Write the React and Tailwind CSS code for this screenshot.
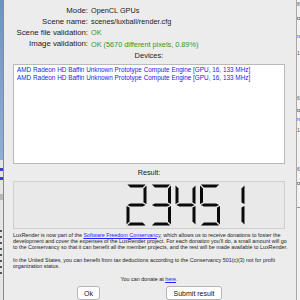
import React from 'react';

// 7-segment digit shapes, digit box 20 x 41
const W = 20;
const H = 41;
const T = 3;
const G = 0.9;
const M = H / 2;

const SEGMENTS = {
  a: `${G},0 ${W - G},0 ${W - G - T},${T} ${G + T},${T}`,
  d: `${G},${H} ${W - G},${H} ${W - G - T},${H - T} ${G + T},${H - T}`,
  g: `${G},${M} ${G + T},${M - T / 2} ${W - G - T},${M - T / 2} ${W - G},${M} ${W - G - T},${M + T / 2} ${G + T},${M + T / 2}`,
  f: `0,${G} ${T},${T + G} ${T},${M - T / 2 - G} 0,${M - G}`,
  b: `${W},${G} ${W - T},${T + G} ${W - T},${M - T / 2 - G} ${W},${M - G}`,
  e: `0,${M + G} ${T},${M + T / 2 + G} ${T},${H - T - G} 0,${H - G}`,
  c: `${W},${M + G} ${W - T},${M + T / 2 + G} ${W - T},${H - T - G} ${W},${H - G}`,
};

const DIGITS = {
  1: ['b', 'c'],
  2: ['a', 'b', 'g', 'e', 'd'],
  3: ['a', 'b', 'g', 'c', 'd'],
  4: ['f', 'g', 'b', 'c'],
  5: ['a', 'f', 'g', 'c', 'd'],
};

const LcdNumber = ({ value }) => {
  const chars = String(value).split('');
  return (
    <svg width={120} height={H + 1} viewBox={`0 0 120 ${H + 1}`}>
      {chars.map((ch, i) => (
        <g key={i} transform={`translate(${i * 24.5 + 0.5} 0.5)`}>
          {DIGITS[ch].map((s) => (
            <polygon key={s} points={SEGMENTS[s]} fill="#0a0a0a" />
          ))}
        </g>
      ))}
    </svg>
  );
};

const InfoRow = ({ label, children, valueClass = 'text-[#1a1a1a]' }) => (
  <div className="flex h-[11.5px] items-center">
    <div className="w-[75px] shrink-0 whitespace-nowrap text-right text-[7.8px] text-[#1a1a1a]">{label}</div>
    <div className={`ml-[3px] whitespace-nowrap text-[7.3px] ${valueClass}`}>{children}</div>
  </div>
);

const devices = [
  'AMD Radeon HD Baffin Unknown Prototype Compute Engine [GPU, 16, 133 MHz]',
  'AMD Radeon HD Baffin Unknown Prototype Compute Engine [GPU, 16, 133 MHz]',
];

export default function App() {
  return (
    <div
      className="flex h-[300px] w-[300px] overflow-hidden bg-[#ececec]"
      style={{ fontFamily: '"Liberation Sans", Arial, sans-serif' }}
    >
      {/* background window, left */}
      <div className="flex w-[4px] shrink-0 flex-col border-r border-[#8a8a8a]">
        <div className="h-[160px] bg-gradient-to-b from-[#6d93c6] to-[#8db0da]" />
        <div className="flex-1 bg-[#e4e4e4]">
          <div className="mt-[8px] h-[3px] w-[3px] bg-[#3a3ae0]" />
          <div className="mt-[6px] h-[3px] w-[3px] bg-[#3a3ae0]" />
          <div className="mt-[14px] h-[6px] bg-[#b8b8b8]" />
          <div className="mt-[30px] flex flex-col gap-[4px]">
            {[0, 1, 2, 3, 4, 5, 6, 7].map((i) => (
              <div key={i} className="h-[2px] w-[2px] bg-[#555]" />
            ))}
          </div>
        </div>
      </div>

      {/* dialog */}
      <div className="flex w-[292px] shrink-0 flex-col pl-[9px] pr-[11px] pt-[5px] text-[7px] leading-none">
        <InfoRow label="Mode:">OpenCL GPUs</InfoRow>
        <InfoRow label="Scene name:">scenes/luxball/render.cfg</InfoRow>
        <InfoRow label="Scene file validation:" valueClass="text-[#2a9a2a]">OK</InfoRow>
        <InfoRow label="Image validation:" valueClass="text-[#2a9a2a]">
          OK (5670 different pixels, 0.89%)
        </InfoRow>
        <div className="flex h-[11.5px] items-center justify-center text-[7.5px] text-[#1a1a1a]">Devices:</div>

        <div className="mt-[3px] h-[102px] border border-[#b9b9b9] bg-white pl-[3px] pt-[2px] text-[6.4px]">
          {devices.map((d, i) => (
            <div key={i} className="h-[7.8px] whitespace-nowrap text-[#2222ee]">
              {d}
            </div>
          ))}
        </div>

        <div className="mt-[3px] flex h-[11px] items-center justify-center text-[7.3px] text-[#1a1a1a]">Result:</div>

        <div className="mt-[3px] flex h-[49px] items-center justify-end border border-[#cfcfcf] bg-[#e9e9e9] pr-[38px]">
          <LcdNumber value="23451" />
        </div>

        <div className="mt-[3px] text-[5.4px] leading-[6.4px] text-[#222]">
          <div className="whitespace-nowrap">
            LuxRender is now part of the{' '}
            <span className="text-[#2323ff] underline">Software Freedom Conservancy</span>, which allows us to
            receive donations to foster the
          </div>
          <div className="whitespace-nowrap">
            development and cover the expenses of the LuxRender project. For each donation you'll do, a small
            amount will go
          </div>
          <div className="whitespace-nowrap">
            to the Conservancy so that it can benefit all the member projects, and the rest will be made
            available to LuxRender.
          </div>
          <div className="mt-[6px] whitespace-nowrap">
            In the United States, you can benefit from tax deductions according to the Conservancy 501(c)(3)
            not for profit
          </div>
          <div className="whitespace-nowrap">organization status.</div>
          <div className="mt-[6px] text-center">
            You can donate at <span className="text-[#2323ff] underline">here</span>.
          </div>
        </div>

        <div className="mt-[4px] flex">
          <button className="ml-[64px] h-[14px] w-[23px] rounded-[3px] border border-[#b4b4b4] bg-white text-[7px] text-[#111]">
            Ok
          </button>
          <button className="ml-[66px] h-[14px] w-[56px] rounded-[3px] border border-[#b4b4b4] bg-white text-[7px] text-[#111]">
            Submit result
          </button>
        </div>
      </div>

      {/* background window, right */}
      <div className="flex w-[4px] shrink-0 flex-col overflow-hidden border-l border-[#a9a9a9] bg-[#f2f2f2] text-[5px] leading-none text-[#555]">
        <div className="mt-[2px]">8</div>
        <div className="mt-[10px] h-[3px] w-[3px] border border-[#999]" />
        <div className="mt-[14px] text-[#2222ee]">n</div>
        <div className="mt-[12px]">1.</div>
        <div className="mt-[40px]">6</div>
        <div className="mt-[8px] h-[3px] w-[3px] border border-[#999]" />
        <div className="mt-[5px] text-[#2222ee]">n</div>
        <div className="mt-[6px]">1.</div>
        <div className="mt-[34px]">6</div>
        <div className="mt-[10px] h-[3px] w-[3px] border border-[#999]" />
        <div className="mt-[22px] h-px bg-[#999]" />
      </div>
    </div>
  );
}
